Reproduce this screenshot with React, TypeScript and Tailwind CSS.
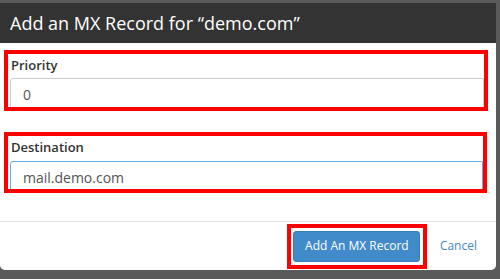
export default function App() {
  return (
    <div className="w-[500px] h-[279px] bg-[#5a5a5a] overflow-hidden font-['Open_Sans',sans-serif]">
      <div className="w-[496px] mt-[3px] bg-white rounded-b-[5px] overflow-hidden">
        {/* Header */}
        <div className="h-[40px] bg-[#333333] flex items-center pl-[10px]">
          <h4 className="text-[18px] text-white leading-none">Add an MX Record for “demo.com”</h4>
        </div>

        {/* Body */}
        <div className="pt-[7px] pb-[28px]">
          <div className="ml-[4px] w-[484px] h-[61px] border-4 border-[#ff0000] overflow-hidden pl-[2px]">
            <label className="block pl-[1px] pt-[1px] text-[13px] leading-5 font-semibold text-[#333]">Priority</label>
            <div className="mt-[3px] h-[32px] border border-[#cccccc] rounded-l-[3px] flex items-center pl-[12px] text-[14px] text-[#555]">
              0
            </div>
          </div>

          <div className="mt-[21px] ml-[4px] w-[483px] h-[61px] border-4 border-[#ff0000] overflow-hidden pl-[2px]">
            <label className="block pl-[1px] pt-[1px] text-[13px] leading-5 font-semibold text-[#333]">Destination</label>
            <div className="mt-[4px] h-[32px] border border-[#66afe9] rounded-l-[3px] flex items-center pl-[12px] text-[14px] text-[#555]">
              mail.demo.com
            </div>
          </div>
        </div>

        {/* Footer */}
        <div className="border-t border-[#e5e5e5] h-[49px] flex items-center justify-end pr-[19px] gap-[13px]">
          <div className="w-[140px] h-[45px] border-4 border-[#ff0000] flex items-center justify-center">
            <button className="w-[127px] h-[31px] bg-[#428bca] border border-[#357ebd] rounded-[3px] text-white text-[12px]">
              Add An MX Record
            </button>
          </div>
          <a className="text-[12px] text-[#428bca]">Cancel</a>
        </div>
      </div>
    </div>
  );
}
